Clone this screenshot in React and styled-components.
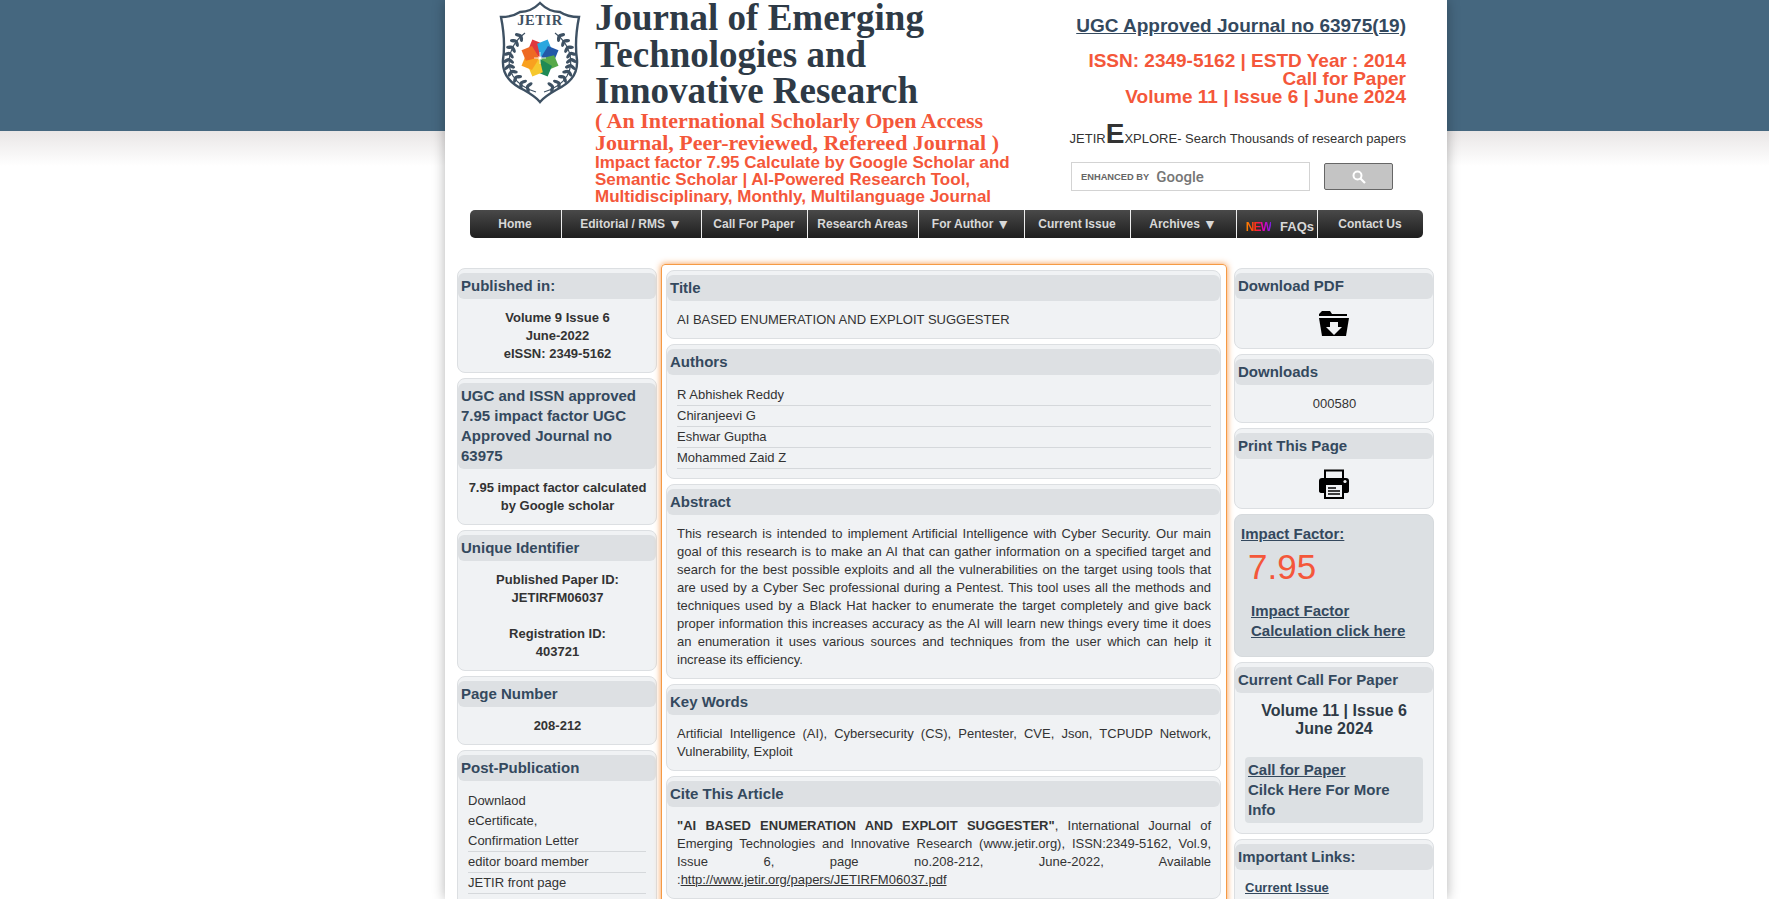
import styled, { createGlobalStyle } from "styled-components";

const GlobalStyle = createGlobalStyle`
  html, body {
    margin: 0;
    padding: 0;
  }
  body {
    font-family: "Liberation Sans", Arial, sans-serif;
    color: #333;
  }
`;

const Page = styled.div`
  height: 100vh;
  overflow: hidden;
  background: linear-gradient(#45677f 0 131px, #e9e6e6 131px, #ffffff 166px);
`;

const Container = styled.div`
  width: 1002px;
  height: 100%;
  margin-left: 445px;
  background: #fff;
  box-shadow: 0 0 12px rgba(0, 0, 0, 0.3);
`;

/* header */
const Header = styled.header`
  display: flex;
  height: 210px;
`;

const LogoWrap = styled.div`
  width: 100px;
  margin: 0 5px 0 45px;
  flex: none;
`;

const TitleCol = styled.div`
  width: 425px;
  flex: none;
`;

const JournalName = styled.h1`
  margin: 0;
  font: bold 37px/36.5px "Liberation Serif", "Times New Roman", serif;
  color: #2e3a46;
`;

const Tagline = styled.div`
  font: bold 22px/22px "Liberation Serif", "Times New Roman", serif;
  color: #f4573a;
`;

const ImpactLine = styled.div`
  font: bold 17px/17px "Liberation Sans", Arial, sans-serif;
  color: #f4573a;
`;

const RightCol = styled.div`
  flex: 1;
  padding: 15px 41px 0 0;
  text-align: right;
`;

const UgcLink = styled.a`
  display: block;
  font: bold 19px/21px "Liberation Sans", Arial, sans-serif;
  color: #34495e;
  text-decoration: underline;
`;

const IssnBlock = styled.div`
  margin-top: 16px;
  font: bold 19px/18px "Liberation Sans", Arial, sans-serif;
  color: #f4573a;
`;

const Explore = styled.div`
  margin-top: 18px;
  font-size: 13px;
  line-height: 30px;
  color: #333;
  b {
    font-size: 28px;
    line-height: 20px;
  }
`;

const SearchRow = styled.div`
  display: flex;
  align-items: center;
  margin-top: 8px;
  padding-right: 13px;
  justify-content: flex-end;
  gap: 14px;
`;

const SearchBox = styled.div`
  display: flex;
  align-items: center;
  width: 239px;
  height: 29px;
  box-sizing: border-box;
  padding-left: 9px;
  border: 1px solid #d3d3d3;
  background: #fff;
  font: bold 9.3px "Liberation Sans", Arial, sans-serif;
  color: #666;
  gap: 7px;
  span {
    font: 500 15px Roboto, sans-serif;
    color: #757575;
  }
`;

const SearchButton = styled.button`
  display: flex;
  align-items: center;
  justify-content: center;
  width: 69px;
  height: 27px;
  padding: 0;
  background: #c4c4c4;
  border: 1px solid #666;
  border-radius: 2px;
`;

/* menu */
const Nav = styled.nav`
  display: grid;
  grid-template-columns: 92px 140px 106px 111px 106px 106px 106px 81px 1fr;
  width: 953px;
  height: 28px;
  margin-left: 25px;
  border-radius: 5px;
  background: linear-gradient(#494949, #1e1e1e);
  overflow: hidden;
`;

const NavItem = styled.a`
  display: flex;
  align-items: center;
  justify-content: center;
  gap: 3px;
  padding: 0 1px 1px 0;
  font-size: 12px;
  font-weight: bold;
  color: #d8d8d8;
  border-right: 1px solid #eee;
  &:last-child {
    border-right: none;
  }
  i {
    font-style: normal;
    font-size: 14px;
  }
`;

const FaqItem = styled(NavItem)`
  justify-content: flex-end;
  gap: 9px;
  padding: 5px 3px 0 0;
  font-size: 13px;
`;

const NewBadge = styled.span`
  font: bold 12px/12px "Liberation Sans", Arial, sans-serif;
  letter-spacing: -0.9px;
  background: linear-gradient(90deg, #ff8a00, #ff2a1a 40%, #e000c0 70%, #7a20e0);
  -webkit-background-clip: text;
  background-clip: text;
  color: transparent;
`;

/* columns */
const Columns = styled.div`
  display: flex;
  align-items: flex-start;
  padding: 26px 0 0 12px;
`;

const SideCol = styled.aside`
  width: 200px;
  margin-top: 4px;
  flex: none;
`;

const LeftCol = styled(SideCol)`
  margin-right: 4px;
`;

const RightSide = styled(SideCol)`
  margin-left: 7px;
`;

const Center = styled.main`
  width: 566px;
  flex: none;
  box-sizing: border-box;
  padding: 5px 5px 5px 4px;
  border: 1px solid #f59a45;
  border-radius: 4px;
  box-shadow: 0 0 6px rgba(247, 140, 50, 0.9);
`;

const Box = styled.section`
  box-sizing: border-box;
  margin-bottom: 5px;
  padding: 4px 0 0;
  background: #f0f2f4;
  border: 1px solid #dcdfe2;
  border-radius: 8px;
`;

const BoxTitle = styled.h3`
  margin: 0;
  padding: 3px 3px;
  font-size: 15px;
  font-weight: bold;
  line-height: 20px;
  color: #34495e;
  background: #dde0e3;
  border-radius: 6px;
`;

const CenterBody = styled.div`
  padding: 10px 9px 9px 10px;
  font-size: 13px;
  line-height: 18px;
  color: #333;
  font-weight: ${(p) => (p.$bold ? "bold" : "normal")};
  text-align: ${(p) => p.$align || "left"};
`;

const AuthorList = styled.ul`
  list-style: none;
  margin: 0;
  padding: 10px 9px 9px 10px;
`;

const ListRow = styled.li`
  box-sizing: border-box;
  height: 21px;
  font-size: 13px;
  line-height: 20px;
  border-bottom: 1px solid #d5d8db;
  color: #333;
`;

const SideList = styled.ul`
  list-style: none;
  margin: 0;
  padding: 10px 10px 0;
`;

const PlainLine = styled.div`
  font-size: 13px;
  line-height: 20px;
  color: #333;
`;

const IconBody = styled.div`
  display: flex;
  align-items: center;
  justify-content: center;
  box-sizing: border-box;
  height: 49px;
  padding-top: 1px;
`;

const ImpactBox = styled.section`
  box-sizing: border-box;
  height: 143px;
  margin-bottom: 5px;
  padding: 9px 8px 0 6px;
  background: #dce0e3;
  border: 1px solid #d6dadd;
  border-radius: 8px;
`;

const ImpactLabel = styled.a`
  font-size: 15px;
  font-weight: bold;
  line-height: 20px;
  color: #34495e;
  text-decoration: underline;
`;

const ImpactValue = styled.div`
  margin: 1px 0 0 7px;
  font-size: 35px;
  line-height: 44px;
  color: #f4573a;
`;

const ImpactLink = styled.a`
  display: block;
  margin: 12px 0 0 10px;
  font-size: 15px;
  font-weight: bold;
  line-height: 20px;
  color: #34495e;
  text-decoration: underline;
`;

const CurrentIssue = styled.div`
  padding: 9px 0 0;
  font-size: 16px;
  font-weight: bold;
  line-height: 18px;
  text-align: center;
  color: #2e3a46;
`;

const CallCard = styled.div`
  margin: 19px 10px 10px;
  padding: 3px 20px 3px 3px;
  background: #dce0e3;
  border-radius: 4px;
  font-size: 15px;
  font-weight: bold;
  line-height: 20px;
  color: #34495e;
  a {
    text-decoration: underline;
  }
`;

const LinksBody = styled.div`
  padding: 9px 10px;
  font-size: 13px;
  font-weight: bold;
  line-height: 18px;
  color: #34495e;
  text-decoration: underline;
`;

const CiteLink = styled.a`
  text-decoration: underline;
  color: #333;
`;

function Branch({ flip }) {
  const stem = "M35 33 C20 44 15 62 23 76 C28 84 36 89 46 92";
  const spots = [
    [32, 35, -40], [27, 40, -50], [23, 46, -60], [20, 52, -70], [19, 58, -85],
    [19, 64, -100], [21, 70, -115], [25, 76, -130], [30, 82, -145], [36, 86, -160],
  ];
  return (
    <g transform={flip ? "translate(100 0) scale(-1 1)" : undefined}>
      <path d={stem} fill="none" stroke="#3e5163" strokeWidth="1.2" />
      {spots.map(([x, y, r]) => (
        <g key={`${x}-${y}`} transform={`translate(${x} ${y}) rotate(${r})`}>
          <ellipse cx="-1" cy="-3.4" rx="1.7" ry="3.6" fill="#3e5163" transform="rotate(-35)" />
          <ellipse cx="-1" cy="3.4" rx="1.7" ry="3.6" fill="#3e5163" transform="rotate(35)" />
        </g>
      ))}
    </g>
  );
}

function Logo() {
  const petals = ["#e0383e", "#2aa7df", "#2358a8", "#57a94a", "#1f8a55", "#f6c82e", "#f9a11f", "#ee6a24"];
  return (
    <svg width="100" height="110" viewBox="0 0 100 110">
      <path
        d="M50 3 C44 9 38 12 30 12 C24 16 17 17 11 17 C14 32 15 46 13 60 C12 76 22 84 34 90 C41 94 46 97 50 102 C54 97 59 94 66 90 C78 84 88 76 87 60 C85 46 86 32 89 17 C83 17 76 16 70 12 C62 12 56 9 50 3 Z"
        fill="#fff"
        stroke="#3e5163"
        strokeWidth="2.4"
      />
      <text x="50" y="25" textAnchor="middle" fontFamily="Liberation Serif, serif" fontWeight="bold" fontSize="14.5" letterSpacing="0.6" fill="#3e5163">
        JETIR
      </text>
      <Branch />
      <Branch flip />
      {petals.map((c, i) => (
        <path key={c} d="M50 57 L42 46 L50 38 L58 46 Z" fill={c} transform={`rotate(${-22.5 + i * 45} 50 58)`} />
      ))}
      <path d="M44 58 H56 M50 52 V64" stroke="#fff" strokeWidth="0.8" />
    </svg>
  );
}

function FolderIcon() {
  return (
    <svg width="30" height="26" viewBox="0 0 30 26">
      <path d="M3 0 H11 L13 3 H28 V5 H0 V3 Z" fill="#000" />
      <path d="M0 7 H30 L27 25 H3 Z" fill="#000" />
      <path d="M11 11 H19 V16 H23 L15 24 L7 16 H11 Z" fill="#f0f2f4" />
    </svg>
  );
}

function PrinterIcon() {
  return (
    <svg width="30" height="30" viewBox="0 0 30 30">
      <path d="M6 9 V1.5 H24 V9" fill="none" stroke="#000" strokeWidth="2" />
      <path d="M3 9 H27 Q30 9 30 12 V22 Q30 24 27 24 H3 Q0 24 0 22 V12 Q0 9 3 9 Z" fill="#000" />
      <circle cx="26" cy="12.5" r="1.6" fill="#f0f2f4" />
      <rect x="6" y="15" width="18" height="14" fill="#f0f2f4" stroke="#000" strokeWidth="2" />
      <path d="M9 19 H17 M9 22 H21 M9 25 H21" stroke="#000" strokeWidth="1.6" />
    </svg>
  );
}

function SearchGlyph() {
  return (
    <svg width="14" height="14" viewBox="0 0 14 14">
      <circle cx="5.5" cy="5.5" r="4" fill="none" stroke="#fff" strokeWidth="2" />
      <path d="M8.5 8.5 L13 13" stroke="#fff" strokeWidth="2.2" />
    </svg>
  );
}

const menu = [
  { label: "Home" },
  { label: "Editorial / RMS", drop: true },
  { label: "Call For Paper" },
  { label: "Research Areas" },
  { label: "For Author", drop: true },
  { label: "Current Issue" },
  { label: "Archives", drop: true },
];

const authors = ["R Abhishek Reddy", "Chiranjeevi G", "Eshwar Guptha", "Mohammed Zaid Z"];

const App = () => {
  return (
    <Page>
      <GlobalStyle />
      <Container>
        <Header>
          <LogoWrap>
            <Logo />
          </LogoWrap>
          <TitleCol>
            <JournalName>
              Journal of Emerging
              <br />
              Technologies and
              <br />
              Innovative Research
            </JournalName>
            <Tagline>
              ( An International Scholarly Open Access
              <br />
              Journal, Peer-reviewed, Refereed Journal )
            </Tagline>
            <ImpactLine>
              Impact factor 7.95 Calculate by Google Scholar and
              <br />
              Semantic Scholar | AI-Powered Research Tool,
              <br />
              Multidisciplinary, Monthly, Multilanguage Journal
            </ImpactLine>
          </TitleCol>
          <RightCol>
            <UgcLink>UGC Approved Journal no 63975(19)</UgcLink>
            <IssnBlock>
              ISSN: 2349-5162 | ESTD Year : 2014
              <br />
              Call for Paper
              <br />
              Volume 11 | Issue 6 | June 2024
            </IssnBlock>
            <Explore>
              JETIR<b>E</b>XPLORE- Search Thousands of research papers
            </Explore>
            <SearchRow>
              <SearchBox>
                ENHANCED BY <span>Google</span>
              </SearchBox>
              <SearchButton aria-label="search">
                <SearchGlyph />
              </SearchButton>
            </SearchRow>
          </RightCol>
        </Header>

        <Nav>
          {menu.map((m) => (
            <NavItem key={m.label}>
              {m.label}
              {m.drop && <i>▼</i>}
            </NavItem>
          ))}
          <FaqItem>
            <NewBadge>NEW</NewBadge>
            FAQs
          </FaqItem>
          <NavItem>Contact Us</NavItem>
        </Nav>

        <Columns>
          <LeftCol>
            <Box>
              <BoxTitle>Published in:</BoxTitle>
              <CenterBody $bold $align="center">
                Volume 9 Issue 6
                <br />
                June-2022
                <br />
                eISSN: 2349-5162
              </CenterBody>
            </Box>
            <Box>
              <BoxTitle>UGC and ISSN approved 7.95 impact factor UGC Approved Journal no 63975</BoxTitle>
              <CenterBody $bold $align="center">
                7.95 impact factor calculated by Google scholar
              </CenterBody>
            </Box>
            <Box>
              <BoxTitle>Unique Identifier</BoxTitle>
              <CenterBody $bold $align="center">
                Published Paper ID:
                <br />
                JETIRFM06037
                <br />
                <br />
                Registration ID:
                <br />
                403721
              </CenterBody>
            </Box>
            <Box>
              <BoxTitle>Page Number</BoxTitle>
              <CenterBody $bold $align="center">
                208-212
              </CenterBody>
            </Box>
            <Box>
              <BoxTitle>Post-Publication</BoxTitle>
              <SideList>
                <PlainLine>Downlaod</PlainLine>
                <PlainLine>eCertificate,</PlainLine>
                <ListRow>Confirmation Letter</ListRow>
                <ListRow>editor board member</ListRow>
                <ListRow>JETIR front page</ListRow>
                <ListRow>Journal Back Page</ListRow>
              </SideList>
            </Box>
          </LeftCol>

          <Center>
            <Box>
              <BoxTitle>Title</BoxTitle>
              <CenterBody>AI BASED ENUMERATION AND EXPLOIT SUGGESTER</CenterBody>
            </Box>
            <Box>
              <BoxTitle>Authors</BoxTitle>
              <AuthorList>
                {authors.map((a) => (
                  <ListRow key={a}>{a}</ListRow>
                ))}
              </AuthorList>
            </Box>
            <Box>
              <BoxTitle>Abstract</BoxTitle>
              <CenterBody $align="justify">
                This research is intended to implement Artificial Intelligence with Cyber Security. Our main goal of this
                research is to make an AI that can gather information on a specified target and search for the best
                possible exploits and all the vulnerabilities on the target using tools that are used by a Cyber Sec
                professional during a Pentest. This tool uses all the methods and techniques used by a Black Hat hacker
                to enumerate the target completely and give back proper information this increases accuracy as the AI
                will learn new things every time it does an enumeration it uses various sources and techniques from the
                user which can help it increase its efficiency.
              </CenterBody>
            </Box>
            <Box>
              <BoxTitle>Key Words</BoxTitle>
              <CenterBody $align="justify">
                Artificial Intelligence (AI), Cybersecurity (CS), Pentester, CVE, Json, TCPUDP Network, Vulnerability,
                Exploit
              </CenterBody>
            </Box>
            <Box>
              <BoxTitle>Cite This Article</BoxTitle>
              <CenterBody $align="justify">
                <b>"AI BASED ENUMERATION AND EXPLOIT SUGGESTER"</b>, International Journal of Emerging Technologies and
                Innovative Research (www.jetir.org), ISSN:2349-5162, Vol.9, Issue 6, page no.208-212, June-2022,
                Available :<CiteLink>http://www.jetir.org/papers/JETIRFM06037.pdf</CiteLink>
              </CenterBody>
            </Box>
          </Center>

          <RightSide>
            <Box>
              <BoxTitle>Download PDF</BoxTitle>
              <IconBody>
                <FolderIcon />
              </IconBody>
            </Box>
            <Box>
              <BoxTitle>Downloads</BoxTitle>
              <CenterBody $align="center">000580</CenterBody>
            </Box>
            <Box>
              <BoxTitle>Print This Page</BoxTitle>
              <IconBody>
                <PrinterIcon />
              </IconBody>
            </Box>
            <ImpactBox>
              <ImpactLabel>Impact Factor:</ImpactLabel>
              <ImpactValue>7.95</ImpactValue>
              <ImpactLink>
                Impact Factor
                <br />
                Calculation click here
              </ImpactLink>
            </ImpactBox>
            <Box>
              <BoxTitle>Current Call For Paper</BoxTitle>
              <CurrentIssue>
                Volume 11 | Issue 6
                <br />
                June 2024
              </CurrentIssue>
              <CallCard>
                <a>Call for Paper</a>
                <br />
                Cilck Here For More Info
              </CallCard>
            </Box>
            <Box>
              <BoxTitle>Important Links:</BoxTitle>
              <LinksBody>Current Issue</LinksBody>
            </Box>
          </RightSide>
        </Columns>
      </Container>
    </Page>
  );
};

export default App;
